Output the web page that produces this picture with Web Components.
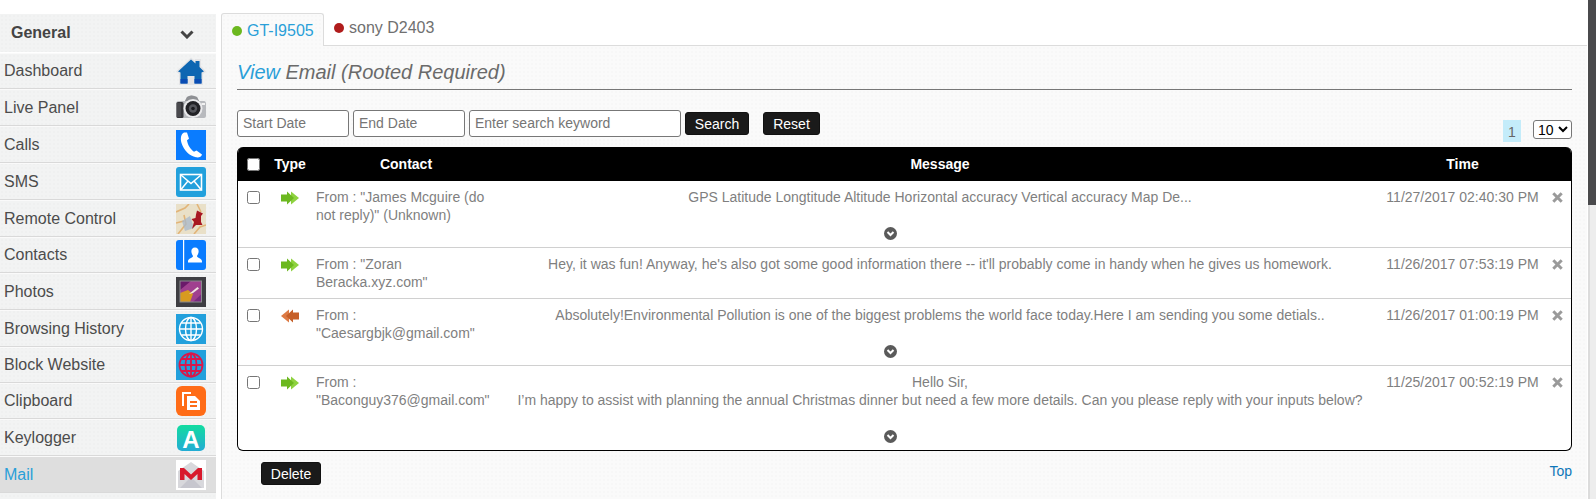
<!DOCTYPE html>
<html lang="en"><head><meta charset="utf-8"><title>View Email</title>
<style>
html,body{margin:0;height:499px;overflow:hidden;background:#fff;font-family:"Liberation Sans",Arial,sans-serif}
</style></head>
<body>
<app-shell>
  <side-nav slot="nav" heading="General">
    <nav-item h="36"><app-icon slot="icon" name="home"></app-icon>Dashboard</nav-item>
    <nav-item><app-icon slot="icon" name="camera"></app-icon>Live Panel</nav-item>
    <nav-item><app-icon slot="icon" name="phone"></app-icon>Calls</nav-item>
    <nav-item><app-icon slot="icon" name="sms"></app-icon>SMS</nav-item>
    <nav-item><app-icon slot="icon" name="pin"></app-icon>Remote Control</nav-item>
    <nav-item h="36"><app-icon slot="icon" name="contacts"></app-icon>Contacts</nav-item>
    <nav-item><app-icon slot="icon" name="photos"></app-icon>Photos</nav-item>
    <nav-item><app-icon slot="icon" name="globe"></app-icon>Browsing History</nav-item>
    <nav-item h="36"><app-icon slot="icon" name="block"></app-icon>Block Website</nav-item>
    <nav-item h="36"><app-icon slot="icon" name="clip"></app-icon>Clipboard</nav-item>
    <nav-item><app-icon slot="icon" name="key"></app-icon>Keylogger</nav-item>
    <nav-item active><app-icon slot="icon" name="mail"></app-icon>Mail</nav-item>
  </side-nav>
  <device-tabs slot="tabs">
    <device-tab active status="on">GT-I9505</device-tab>
    <device-tab status="off">sony D2403</device-tab>
  </device-tabs>
  <mail-panel slot="panel">
    <page-title><span slot="accent">View</span>Email (Rooted Required)</page-title>
    <mail-toolbar></mail-toolbar>
    <mail-table>
      <mail-row dir="in" expand><span slot="contact">From : "James Mcguire (do not reply)" (Unknown)</span>GPS Latitude Longtitude Altitude Horizontal accuracy Vertical accuracy Map De...<span slot="time">11/27/2017 02:40:30 PM</span></mail-row>
      <mail-row dir="in"><span slot="contact">From : "Zoran Beracka.xyz.com"</span>Hey, it was fun! Anyway, he's also got some good information there -- it'll probably come in handy when he gives us homework.<span slot="time">11/26/2017 07:53:19 PM</span></mail-row>
      <mail-row dir="out" expand><span slot="contact">From : "Caesargbjk@gmail.com"</span>Absolutely!Environmental Pollution is one of the biggest problems the world face today.Here I am sending you some detials..<span slot="time">11/26/2017 01:00:19 PM</span></mail-row>
      <mail-row dir="in" expand last><span slot="contact">From : "Baconguy376@gmail.com"</span>Hello Sir,<br>I’m happy to assist with planning the annual Christmas dinner but need a few more details. Can you please reply with your inputs below?<span slot="time">11/25/2017 00:52:19 PM</span></mail-row>
    </mail-table>
    <mail-footer></mail-footer>
  </mail-panel>
</app-shell>
<script>
const define=(name,html)=>{
  customElements.define(name,class extends HTMLElement{
    constructor(){super();this.attachShadow({mode:'open'});}
    connectedCallback(){this.shadowRoot.innerHTML=typeof html==='function'?html(this):html;}
  });
};
const DOTS='background-image:radial-gradient(rgba(0,0,0,.01) 1px,transparent 1.2px);background-size:4px 4px;';
const ICONS={
home:`<path d="M15 1.500 L19 5 V3 H25 V10 L30 15.500 L27 18 V29 H3 V18 L0 15.500 Z" fill="#e4e4e6"/><path d="M15 3.500 L19.500 7.500 V5 H23.500 V11 L28 15.500 L25.500 16.500 V27.500 H18.500 V20 H11.500 V27.500 H4.500 V16.500 L2 15.500 Z" fill="#0d66b2"/><rect x="4.500" y="23" width="7" height="4.500" fill="#0a4cb4"/><rect x="18.500" y="23" width="7" height="4.500" fill="#0a4cb4"/>`,
camera:`<path d="M0 11 Q0 8 3 8 H9 L11 4 Q15 1 21 4 L23 8 H28 Q30 8 30 11 V23 Q30 25 28 25 H2 Q0 25 0 23Z" fill="#b8babe"/><path d="M11 4 Q15 1 21 4 L23 8 H9Z" fill="#8e9094"/><rect x="0.500" y="9" width="7" height="16" rx="1.500" fill="#36363a"/><path d="M2 10 V24 M4 10 V24" stroke="#5c5c60"/><circle cx="17" cy="15.500" r="9.500" fill="#eaeaec"/><circle cx="17" cy="15.500" r="7.500" fill="#222226"/><circle cx="17" cy="15.500" r="4.200" fill="#55565c"/><circle cx="17" cy="15.500" r="1.800" fill="#1a1a1e"/><rect x="25.500" y="10" width="3.500" height="2" fill="#f2f2f2"/>`,
phone:`<rect width="30" height="30" fill="#0a7cff"/><path d="M8 2.500 C5 4 4.200 8 5.500 13 C8 20.500 13.500 26 20 27.300 C23 27.800 25.500 26.800 26 24.500 L20.500 20.500 L18 21.800 C14.500 19.500 11.500 14.500 11 10.300 L13 8.800 L11 2.500 Z" fill="#fff"/>`,
sms:`<rect width="30" height="30" rx="3" fill="#22a0dc"/><rect x="4.500" y="7.500" width="21" height="15.500" fill="none" stroke="#fff" stroke-width="1.600"/><path d="M5 8 L15 16.500 L25 8 M5 22.500 L12 14 M25 22.500 L18 14" fill="none" stroke="#fff" stroke-width="1.500"/>`,
pin:`<rect width="30" height="30" fill="#e9e0c8"/><path d="M0 8 L9 4 L13 0 M2 30 L10 20 L8 11 M18 30 L24 23 L30 21 M21 0 L25 8 M0 19 L8 17" stroke="#e2b478" stroke-width="1.600" fill="none"/><path d="M6 17 L14 12 L18 24 L9 27Z" fill="#a7b8cc" opacity=".75"/><path d="M21 6.500 L27 9.500 L25 12 L25 18 L26.500 21 L20 21 L16 25 L18 18 L15.500 15 L19.500 14 L20 10.500Z" fill="#a81822"/>`,
contacts:`<rect width="30" height="30" rx="3" fill="#0a7cff"/><rect x="7" width="1.200" height="30" fill="#fff"/><path d="M19 7.500 C22 7.500 23 10 22.500 12.500 C22.200 14 21.500 15 21 16 C21 18 26 18 26 21.500 V22.500 H12 V21.500 C12 18 17 18 17 16 C16.500 15 15.800 14 15.500 12.500 C15 10 16 7.500 19 7.500Z" fill="#fff"/>`,
photos:`<rect width="30" height="30" fill="#3e3e42"/><rect x="4" y="4" width="21.500" height="21" fill="#a0408f"/><path d="M4 4 H15 L4 13Z" fill="#6a1a6a"/><path d="M4 25 V16 L12 13 L17 17 L14 25Z" fill="#d89a20"/><path d="M25.500 25 H17 L25.500 17Z" fill="#7a2a80"/><path d="M13 17 L21.500 10 L23 11.500 L17 16Z" fill="#f0e4e0"/><rect x="4" y="4" width="21.500" height="21" fill="none" stroke="#8a8a8e"/>`,
globe:`<rect width="30" height="30" fill="#22a0dc"/><g fill="none" stroke="#fff" stroke-width="1.400"><circle cx="15" cy="15" r="11.500"/><ellipse cx="15" cy="15" rx="5.500" ry="11.500"/><path d="M15 3.500 V26.500 M3.500 15 H26.500 M5.500 9 H24.500 M5.500 21 H24.500"/></g>`,
block:`<rect width="30" height="30" fill="#22a0dc"/><g fill="none" stroke="#d8184a" stroke-width="1.800"><circle cx="15" cy="15" r="11.500"/><ellipse cx="15" cy="15" rx="5.500" ry="11.500"/><path d="M15 3.500 V26.500 M3.500 15 H26.500 M5.500 9 H24.500 M5.500 21 H24.500"/></g>`,
clip:`<rect width="30" height="30" rx="6" fill="#ff6c17"/><path d="M6 6 H15 V8 H8 V20 H6Z" fill="#fff"/><path d="M11 10 H19 L24 15 V24 H11Z" fill="#fff"/><path d="M14 16 H21 M14 20 H21" stroke="#ff6c17" stroke-width="2"/>`,
key:`<defs><linearGradient id="kg" x1="0" y1="0" x2="0" y2="1"><stop offset="0" stop-color="#12dca0"/><stop offset="1" stop-color="#23acd4"/></linearGradient></defs><rect x="1" y="2" width="28" height="26" rx="5" fill="url(#kg)"/><text x="15" y="24.500" text-anchor="middle" font-family="Liberation Sans" font-weight="700" font-size="24" fill="#fff">A</text>`,
mail:`<rect width="30" height="30" fill="#fff"/><path d="M2 11 L15 2 L28 11 V28 H2Z" fill="#d8d8dc"/><path d="M4 28 L15 17 L26 28Z" fill="#c6c6ce"/><path d="M4 8 H8 L15 14.500 L22 8 H26 V20 H21.500 V14 L15 20 L8.500 14 V20 H4Z" fill="#d8192c"/>`
};
define('app-icon',h=>`<style>:host{display:block;width:30px;height:30px}svg{display:block}</style><svg width="30" height="30" viewBox="0 0 30 30" aria-hidden="true">${ICONS[h.getAttribute('name')]||''}</svg>`);

define('app-shell',`<style>
:host{display:flex;width:1596px;height:499px}
.nav{flex:0 0 216px;padding-top:14px;box-sizing:border-box;background:#fff}
.main{flex:0 0 1366px;margin-left:5px;display:flex;flex-direction:column;min-width:0}
.bar{flex:0 0 8px;margin-left:1px;display:flex;flex-direction:column;background:#ededed;border-left:2px solid #dcdcdc;box-sizing:border-box}
.thumb{height:205px;background:#4a4a4c;margin-left:-2px}
</style>
<div class="nav"><slot name="nav"></slot></div>
<div class="main"><slot name="tabs"></slot><slot name="panel"></slot></div>
<div class="bar"><div class="thumb"></div></div>`);

define('side-nav',h=>`<style>
:host{display:block;background:#f2f3f3;${DOTS}height:485px;color:#444;font-size:16px}
.head{height:38px;display:flex;align-items:center;justify-content:space-between;padding:0 22px 0 11px;font-weight:700;border-bottom:1px solid #fff}
svg{display:block;margin-top:2px}
</style><div class="head"><span>${h.getAttribute('heading')}</span>
<svg width="14" height="9" viewBox="0 0 14 9"><path d="M1.500 1.500 L7 7 L12.500 1.500" fill="none" stroke="#444" stroke-width="3"/></svg></div><slot></slot>`);

define('nav-item',h=>`<style>
:host{display:flex;align-items:center;justify-content:space-between;box-sizing:border-box;height:${h.getAttribute('h')||37}px;padding:0 10px 0 4px;
 border-top:1px solid #fafafa;border-bottom:1px solid #d9d9d9;font-size:16px;color:#4c4c4c;
 ${h.hasAttribute('active')?'background:#dedede;color:#2a9fd8;':''}}
</style><span><slot></slot></span><slot name="icon"></slot>`);

define('device-tabs',`<style>
:host{display:flex;box-sizing:border-box;padding-top:13px;height:46px;border-bottom:1px solid #dcdcdc;background:#fff}
</style><slot></slot>`);

define('device-tab',h=>{const on=h.getAttribute('status')==='on';const act=h.hasAttribute('active');return `<style>
:host{display:flex;align-items:center;box-sizing:border-box;height:33px;font-size:16px;
 ${act?`width:103px;padding:1px 0 0 10px;background:#fafafa;${DOTS}border:1px solid #dcdcdc;border-bottom:0;border-radius:3px 3px 0 0;color:#2a9fd8;`:'padding:0 0 3px 10px;color:#707070;'}}
i{display:block;width:10px;height:10px;border-radius:50%;margin-right:5px;background:${on?'#6cb81f':'#b01c1c'}}
</style><i></i><slot></slot>`});

define('mail-panel',`<style>
:host{display:block;flex:1;box-sizing:border-box;background:#fafafa;${DOTS}border-left:1px solid #dcdcdc;padding:0 15px 0 15px;height:453px}
</style><slot></slot>`);

define('page-title',`<style>
:host{display:block;height:44px;box-sizing:border-box;padding-top:13px;border-bottom:1px solid #777;font-style:italic;font-size:20px;line-height:26px;color:#6a6a6a}
.a{color:#2a9fd8;margin-right:5.500px}
</style><span class="a"><slot name="accent"></slot></span><slot></slot>`);

const btn=`button{font:14px "Liberation Sans",Arial,sans-serif;color:#fff;background:#1a1a1a;border:1px solid #111;border-radius:3px;height:23px;padding:0;cursor:pointer}`;
define('mail-toolbar',`<style>
:host{display:flex;align-items:flex-start;gap:4px;height:57px;padding-top:20px;box-sizing:border-box}
input{box-sizing:border-box;height:27px;width:112px;border:1px solid #777;border-radius:3px;background:#fff;padding:0 5px 2px;margin:0;font:14px "Liberation Sans",Arial,sans-serif}
.k{width:212px}
${btn}
.s{margin-top:2px;width:64px}.r{margin:2px 0 0 10px;width:57px}
.pg{margin-left:auto;margin-top:10px;width:18px;height:22px;background:#c4ecfa;color:#666;font-size:14px;line-height:24px;text-align:center}
select{box-sizing:border-box;margin:10px 0 0 8px;width:39px;height:19px;font:14px "Liberation Sans",Arial,sans-serif;border:1px solid #777;border-radius:3px;background:#fff;color:#000;padding:0}
</style><input placeholder="Start Date" aria-label="Start Date"><input placeholder="End Date" aria-label="End Date"><input class="k" placeholder="Enter search keyword" aria-label="Keyword"><button class="s">Search</button><button class="r">Reset</button><div class="pg">1</div><select aria-label="Page size"><option>10</option></select>`);

const GRID='grid-template-columns:34px 36px 196px 872px 173px 1fr';
define('mail-table',`<style>
:host{display:block;border:1px solid #000;border-top:0;border-radius:6px;background:#fff;box-sizing:border-box;overflow:hidden}
.h{display:grid;${GRID};height:34px;align-items:center;background:#000;color:#fff;font-weight:700;font-size:14px;text-align:center;margin:0 -1px;padding:0 1px}
input{display:block;margin:0 0 0 9px;width:13px;height:13px}
</style><div class="h"><div><input type="checkbox" aria-label="Select all"></div><div>Type</div><div>Contact</div><div>Message</div><div>Time</div><div></div></div><slot></slot>`);

define('mail-row',h=>{
 const inb=h.getAttribute('dir')==='in';
 const c=inb?'#6cb81f':'#c65f28';
 const t=inb?'#8ed23f':'#dd7a44';
 const arrow=`<svg width="18" height="14" viewBox="0 0 18 14"><g transform="${inb?'':'translate(18 0) scale(-1 1)'}"><path d="M10 0.500 L18 7 L10 13.500Z" fill="${t}"/><rect x="0" y="3.500" width="7" height="7" fill="${c}"/><path d="M6 0.500 L13 7 L6 13.500Z" fill="${c}"/></g></svg>`;
 return `<style>
:host{display:grid;${GRID};box-sizing:border-box;font-size:14px;line-height:18px;color:#7f7f7f;${h.hasAttribute('last')?'':'border-bottom:1px solid #d0d0d0;'}}
.ck{padding-top:10px}input{display:block;margin:0 0 0 9px;width:13px;height:13px}
.ty{padding-top:10px;display:flex;justify-content:center}svg{display:block}
.co{padding:7px 8px 7px}
.ms{padding:7px 0 7px;text-align:center}
.chev{padding:21px 100px 0 0;height:13px;${h.hasAttribute('expand')?'':'display:none;'}}
.chev svg{margin:0 auto}
.ti{padding-top:7px;text-align:center;white-space:nowrap}
.x{padding:11px 0 0 3px}
</style>
<div class="ck"><input type="checkbox" aria-label="Select"></div>
<div class="ty">${arrow}</div>
<div class="co"><slot name="contact"></slot></div>
<div class="ms"><slot></slot><div class="chev"><svg width="13" height="13" viewBox="0 0 13 13"><circle cx="6.500" cy="6.500" r="6.500" fill="#5a5a5a"/><path d="M3.500 5 L6.500 8 L9.500 5" fill="none" stroke="#fff" stroke-width="2"/></svg></div></div>
<div class="ti"><slot name="time"></slot></div>
<div class="x"><svg width="11" height="11" viewBox="0 0 11 11"><path d="M1.300 1.300 L9.700 9.700 M9.700 1.300 L1.300 9.700" stroke="#9a9a9a" stroke-width="3"/></svg></div>`});

define('mail-footer',`<style>
:host{display:flex;justify-content:space-between;align-items:flex-start;padding:11px 0 0 24px;font-size:14px}
${btn}
button{width:60px}
a{color:#0e76b8;text-decoration:none;margin-top:1px;line-height:16px}
</style><button>Delete</button><a href="#top">Top</a>`);
</script>
</body></html>
